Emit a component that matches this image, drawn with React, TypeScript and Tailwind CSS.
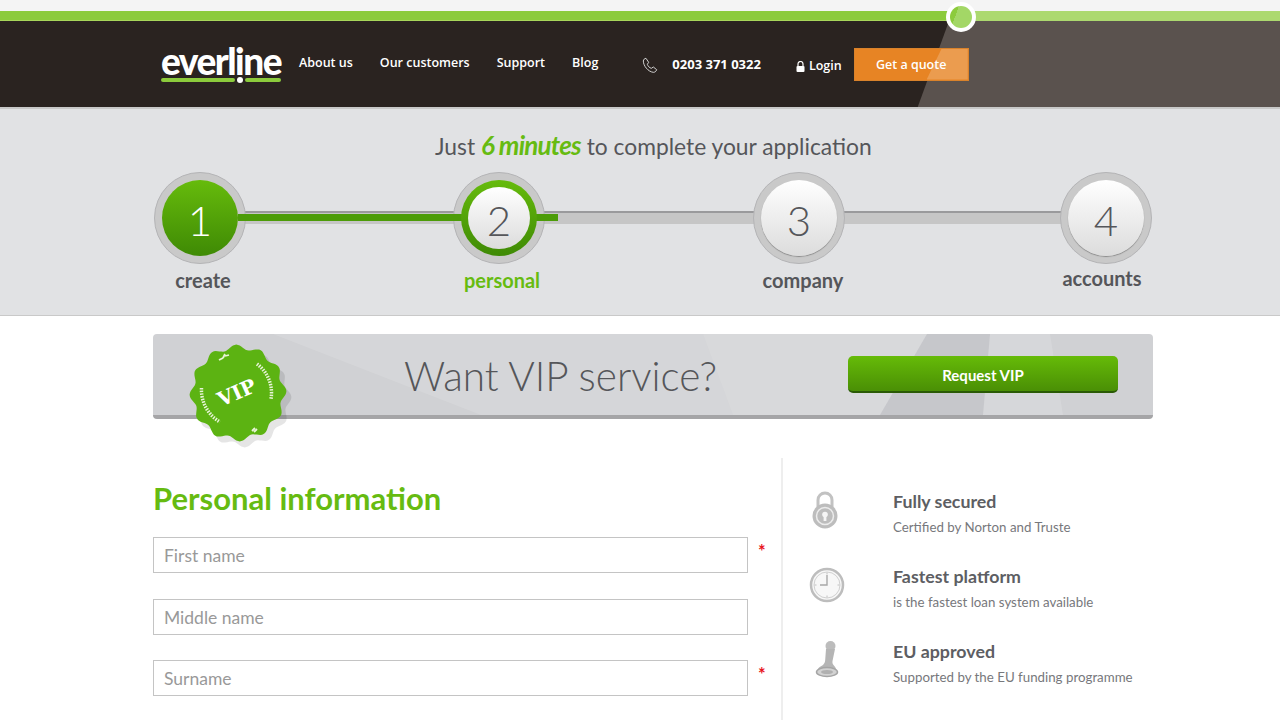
const steps = [
  { n: '1', label: 'create', state: 'done', stepClass: '', labelClass: 'pl-[6px] text-[#55565a] mt-[3px]' },
  { n: '2', label: 'personal', state: 'current', stepClass: 'ml-[207px]', labelClass: 'pl-[6px] text-[#66bb11] mt-[3px]' },
  { n: '3', label: 'company', state: 'todo', stepClass: 'ml-[208px]', labelClass: 'pl-[8px] text-[#55565a] mt-[3px]' },
  { n: '4', label: 'accounts', state: 'todo', stepClass: 'ml-[215px]', labelClass: 'pr-[8px] text-[#55565a] mt-[1px]' },
]

const features = [
  { title: 'Fully secured', body: 'Certified by Norton and Truste', icon: <LockIcon /> },
  { title: 'Fastest platform', body: 'is the fastest loan system available', icon: <ClockIcon /> },
  { title: 'EU approved', body: 'Supported by the EU funding programme', icon: <StampIcon /> },
]

const fields = [
  { placeholder: 'First name', required: true },
  { placeholder: 'Middle name', required: false },
  { placeholder: 'Surname', required: true },
]

function LockIcon() {
  return (
    <svg width="28" height="38" viewBox="0 0 28 38" className="-translate-x-[2px]">
      <path d="M7 16V9a7 7 0 0 1 14 0v7" fill="none" stroke="#c2c2c2" strokeWidth="3" />
      <circle cx="14" cy="25" r="12.5" fill="#bdbdbd" />
      <circle cx="14" cy="25" r="8.5" fill="none" stroke="#ececec" strokeWidth="1.5" />
      <circle cx="14" cy="23.5" r="2.8" fill="#f5f5f5" />
      <rect x="12.6" y="24" width="2.8" height="6" fill="#f5f5f5" />
    </svg>
  )
}

function ClockIcon() {
  return (
    <svg width="36" height="36" viewBox="0 0 36 36">
      <circle cx="18" cy="18" r="16" fill="#f7f7f7" stroke="#bdbdbd" strokeWidth="2.5" />
      <circle cx="18" cy="18" r="13" fill="none" stroke="#d0d0d0" strokeWidth="1" />
      <path d="M18 8v10H11" fill="none" stroke="#a8a8a8" strokeWidth="1.4" />
      <path d="M18 5.5v2M18 28.5v2M5.5 18h2M28.5 18h2" stroke="#c0c0c0" strokeWidth="1" />
    </svg>
  )
}

function StampIcon() {
  return (
    <svg width="24" height="38" viewBox="0 0 24 38">
      <ellipse cx="15.5" cy="5" rx="5" ry="5" fill="#bcbcbc" />
      <path d="M11 8h9l-2.500 12c-.3 2 .3 3 1 4 1 1.500 2.500 2.500 2.500 4.500H3c0-2 3-3 5-4.500 1.500-1.500 2-3 2.200-5z" fill="#b5b5b5" />
      <ellipse cx="12" cy="31" rx="10.500" ry="4.500" fill="#d2d2d2" stroke="#a5a5a5" strokeWidth="1.500" />
      <ellipse cx="12" cy="31" rx="6" ry="2" fill="#b0b0b0" />
    </svg>
  )
}

function VipBadge() {
  // scalloped edge: 12 bumps around the centre
  const pts: string[] = []
  for (let i = 0; i <= 180; i++) {
    const a = (i / 180) * Math.PI * 2
    const r = 46 + 2.4 * Math.cos(a * 12 + 0.5)
    pts.push(`${(50 + r * Math.cos(a)).toFixed(1)},${(50 + r * Math.sin(a)).toFixed(1)}`)
  }
  const shape = pts.join(' ')
  return (
    <svg width="112" height="112" viewBox="0 0 112 112" className="absolute left-[35px] top-[9px]">
      <polygon points={shape} fill="#000" opacity="0.1" transform="translate(5 6)" />
      <polygon points={shape} fill="#5cb312" />
      <path d="M13.500 45a37 37 0 0 0 18.500 34" fill="none" stroke="#e8f4d8" strokeWidth="3.500" strokeDasharray="1.500 1.200" />
      <path d="M69 21a36 36 0 0 1 14 35" fill="none" stroke="#e8f4d8" strokeWidth="3.500" strokeDasharray="1.500 1.200" />
      <path d="M31 17l4 -2M35 15l2 -4M37 13l4 -1" stroke="#e8f4d8" strokeWidth="1.800" />
      <path d="M64 88l3 -3M66 89l3 -3" stroke="#e8f4d8" strokeWidth="1.800" />
      <text
        x="49"
        y="56"
        textAnchor="middle"
        transform="rotate(-24 50 50)"
        fill="#fff"
        fontFamily='"DejaVu Serif", serif'
        fontWeight="700"
        fontSize="20"
      >
        VIP
      </text>
    </svg>
  )
}

function BannerFacets() {
  return (
    <svg width="1000" height="81" viewBox="0 0 1000 81" className="absolute left-0 top-0 rounded-t-[4px]">
      <polygon points="120,0 550,0 580,81 328,81" fill="#ffffff" opacity="0.12" />
      <polygon points="550,0 774,0 727,81 580,81" fill="#ffffff" opacity="0.18" />
      <polygon points="774,0 837,0 830,81 727,81" fill="#a5a6ac" opacity="0.22" />
      <polygon points="837,0 897,0 910,81 830,81" fill="#ffffff" opacity="0.14" />
    </svg>
  )
}

function StepCircle({ n, state }: { n: string; state: string }) {
  return (
    <div className="flex h-[92px] w-[92px] items-center justify-center rounded-full border border-[#b4b4b6] bg-[#c9c9c9]">
      {state === 'done' && (
        <div className="relative z-20 flex h-[76px] w-[76px] items-center justify-center rounded-full bg-gradient-to-b from-[#66bb0c] to-[#3f8a05] pt-[4px] text-[42px] font-light text-white">
          {n}
        </div>
      )}
      {state === 'current' && (
        <div className="relative z-20 flex h-[76px] w-[76px] items-center justify-center rounded-full bg-gradient-to-b from-[#66bb0c] to-[#3f8a05]">
          <div className="flex h-[62px] w-[62px] items-center justify-center rounded-full bg-gradient-to-b from-white to-[#dcdcdc] pt-[4px] text-[42px] font-light text-[#55565a]">
            {n}
          </div>
        </div>
      )}
      {state === 'todo' && (
        <div className="relative z-20 flex h-[76px] w-[76px] items-center justify-center rounded-full bg-gradient-to-b from-white to-[#dcdcdc] pt-[4px] text-[42px] font-light text-[#55565a] shadow-[0_1px_1px_#8a8a8a]">
          {n}
        </div>
      )}
    </div>
  )
}

export default function App() {
  return (
    <div className="h-[720px] w-[1280px] overflow-hidden bg-white font-['Lato','Noto_Sans',sans-serif]">
      <div className="h-[11px] bg-[#f4f4f4]" />
      <header className="relative h-[98px] overflow-hidden border-b-2 border-[#c8c8c8] bg-[#2a2320] font-['Open_Sans',sans-serif]">
        <div className="h-[10px] border-b border-[#a8d65a] bg-[#8ccb3c]" />
        <div className="absolute left-[961px] right-0 top-0 h-[10px] bg-[#acd96f]" />
        <div className="absolute left-[917px] top-[10px] h-[88px] w-[500px] bg-[#5a524e] [clip-path:polygon(32px_0,100%_0,100%_100%,0_100%)]" />
        <div className="relative flex h-[86px] items-center pl-[161px]">
          <div className="w-[120px]">
            <div className="font-['Lato',sans-serif] text-[37px] font-black leading-[32px] tracking-[-1.5px] text-white">everline</div>
            <div className="flex items-center gap-[2px]">
              <div className="h-[4px] w-[74px] rounded-full bg-[#8ccb3c]" />
              <div className="h-[6px] w-[6px] rounded-full bg-white" />
              <div className="h-[4px] w-[36px] rounded-full bg-[#8ccb3c]" />
            </div>
          </div>
          <nav className="ml-[18px] flex -translate-y-[1px] gap-[27px] text-[12.5px] font-semibold text-white">
            <a>About us</a>
            <a>Our customers</a>
            <a>Support</a>
            <a>Blog</a>
          </nav>
          <div className="ml-[44px] flex translate-y-[1px] items-center gap-[14px] text-[13px] font-bold text-white">
            <svg width="16" height="16" viewBox="0 0 24 24" fill="none" stroke="#dddddd" strokeWidth="1.400">
              <path d="M6 2l4 6-2 3c1 3 3 5 6 6l3-2 5 4c-1 3-3 4-5 4C9 22 2 13 2 6c0-2 2-4 4-4z" />
            </svg>
            <span>0203 371 0322</span>
          </div>
          <div className="ml-[35px] flex translate-y-[2px] items-center gap-[4px] text-[12.5px] font-semibold text-white">
            <svg width="9" height="11" viewBox="0 0 9 11">
              <path d="M2 5V3a2.500 2.500 0 0 1 5 0v2" fill="none" stroke="#fff" strokeWidth="1.200" />
              <rect x="0.5" y="5" width="8" height="6" rx="1" fill="#fff" />
            </svg>
            <span>Login</span>
          </div>
          <button className="relative ml-[12px] h-[33px] w-[115px] border border-[#d9822b] bg-[#e78424] pt-[2px] text-[12.5px] font-semibold text-white">
            Get a quote
            <span className="absolute right-0 top-0 h-full w-[41px] bg-white/20 [clip-path:polygon(15px_0,100%_0,100%_100%,0_100%)]" />
          </button>
        </div>
      </header>
      <div className="absolute left-[946px] top-[2px] flex h-[30px] w-[30px] items-center justify-center rounded-full bg-white">
        <div className="h-[22px] w-[22px] rounded-full bg-[linear-gradient(110deg,#8ccb3c_30%,#a3d766_30%)]" />
      </div>

      <section className="h-[207px] border-b border-[#c9c9c9] bg-[#e1e2e4]">
        <h2 className="pl-[435px] pt-[22px] text-[22.8px] font-normal leading-[30px] text-[#55565a]">
          Just <span className="text-[26px] font-bold italic leading-[20px] tracking-[-0.8px] text-[#66bb11]">6 minutes</span> to complete your application
        </h2>
        <div className="relative ml-[154px] mt-[11px] flex w-[998px]">
          <div className="absolute left-[40px] right-[40px] top-[39px] h-[13px] border-t-2 border-[#9a9a9c] bg-[#c6c6c6]" />
          <div className="absolute left-[84px] top-[42px] z-10 h-[7px] w-[320px] bg-[#4c9c08]" />
          {steps.map(step => (
            <div key={step.n} className={`${step.stepClass} relative w-[92px]`}>
              <StepCircle n={step.n} state={step.state} />
              <div className={`${step.labelClass} whitespace-nowrap text-center text-[20px] font-bold leading-[26px]`}>{step.label}</div>
            </div>
          ))}
        </div>
      </section>

      <div className="relative ml-[153px] mt-[18px] flex h-[85px] w-[1000px] items-center rounded-[4px] border-b-[4px] border-[#a5a5a7] bg-[#d0d1d4]">
        <BannerFacets />
        <VipBadge />
        <div className="relative ml-[251px] translate-y-[2px] text-[40.5px] font-light text-[#55565a]">Want VIP service?</div>
        <button className="absolute left-[695px] top-[22px] h-[37px] w-[270px] rounded-[5px] border-b-2 border-[#2a5a05] bg-gradient-to-b from-[#66bb08] to-[#4a8f05] pt-[3px] text-[15px] font-bold text-white">
          Request VIP
        </button>
      </div>

      <div className="ml-[153px] mt-[39px] flex h-[270px] w-[1000px]">
        <div className="w-[630px] border-r-2 border-[#eeeeee] pt-[21px]">
          <h1 className="text-[31px] font-bold leading-[38px] text-[#66bb11]">Personal information</h1>
          <div className="mt-[20px] flex flex-col gap-[25.500px]">
            {fields.map(field => (
              <div key={field.placeholder} className="flex">
                <input
                  placeholder={field.placeholder}
                  className="h-[36px] w-[595px] border border-[#c4c4c4] bg-white px-[10px] pt-[1px] text-[17.5px] placeholder:text-[#999999]"
                />
                {field.required && <span className="ml-[10px] mt-[3px] text-[18px] font-bold leading-[22px] text-[#e8141c]">*</span>}
              </div>
            ))}
          </div>
        </div>
        <div className="flex-1 pl-[26px] pt-[31px]">
          <div className="flex flex-col gap-[27px]">
            {features.map(feature => (
              <div key={feature.title} className="flex h-[48px] items-center">
                <div className="mr-[48px] flex w-[36px] shrink-0 -translate-y-[3px] justify-center">{feature.icon}</div>
                <div>
                  <div className="text-[17.8px] font-bold leading-[24px] text-[#5d5e63]">{feature.title}</div>
                  <div className="mt-[4px] text-[13.3px] leading-[20px] text-[#77787c]">{feature.body}</div>
                </div>
              </div>
            ))}
          </div>
        </div>
      </div>
    </div>
  )
}
